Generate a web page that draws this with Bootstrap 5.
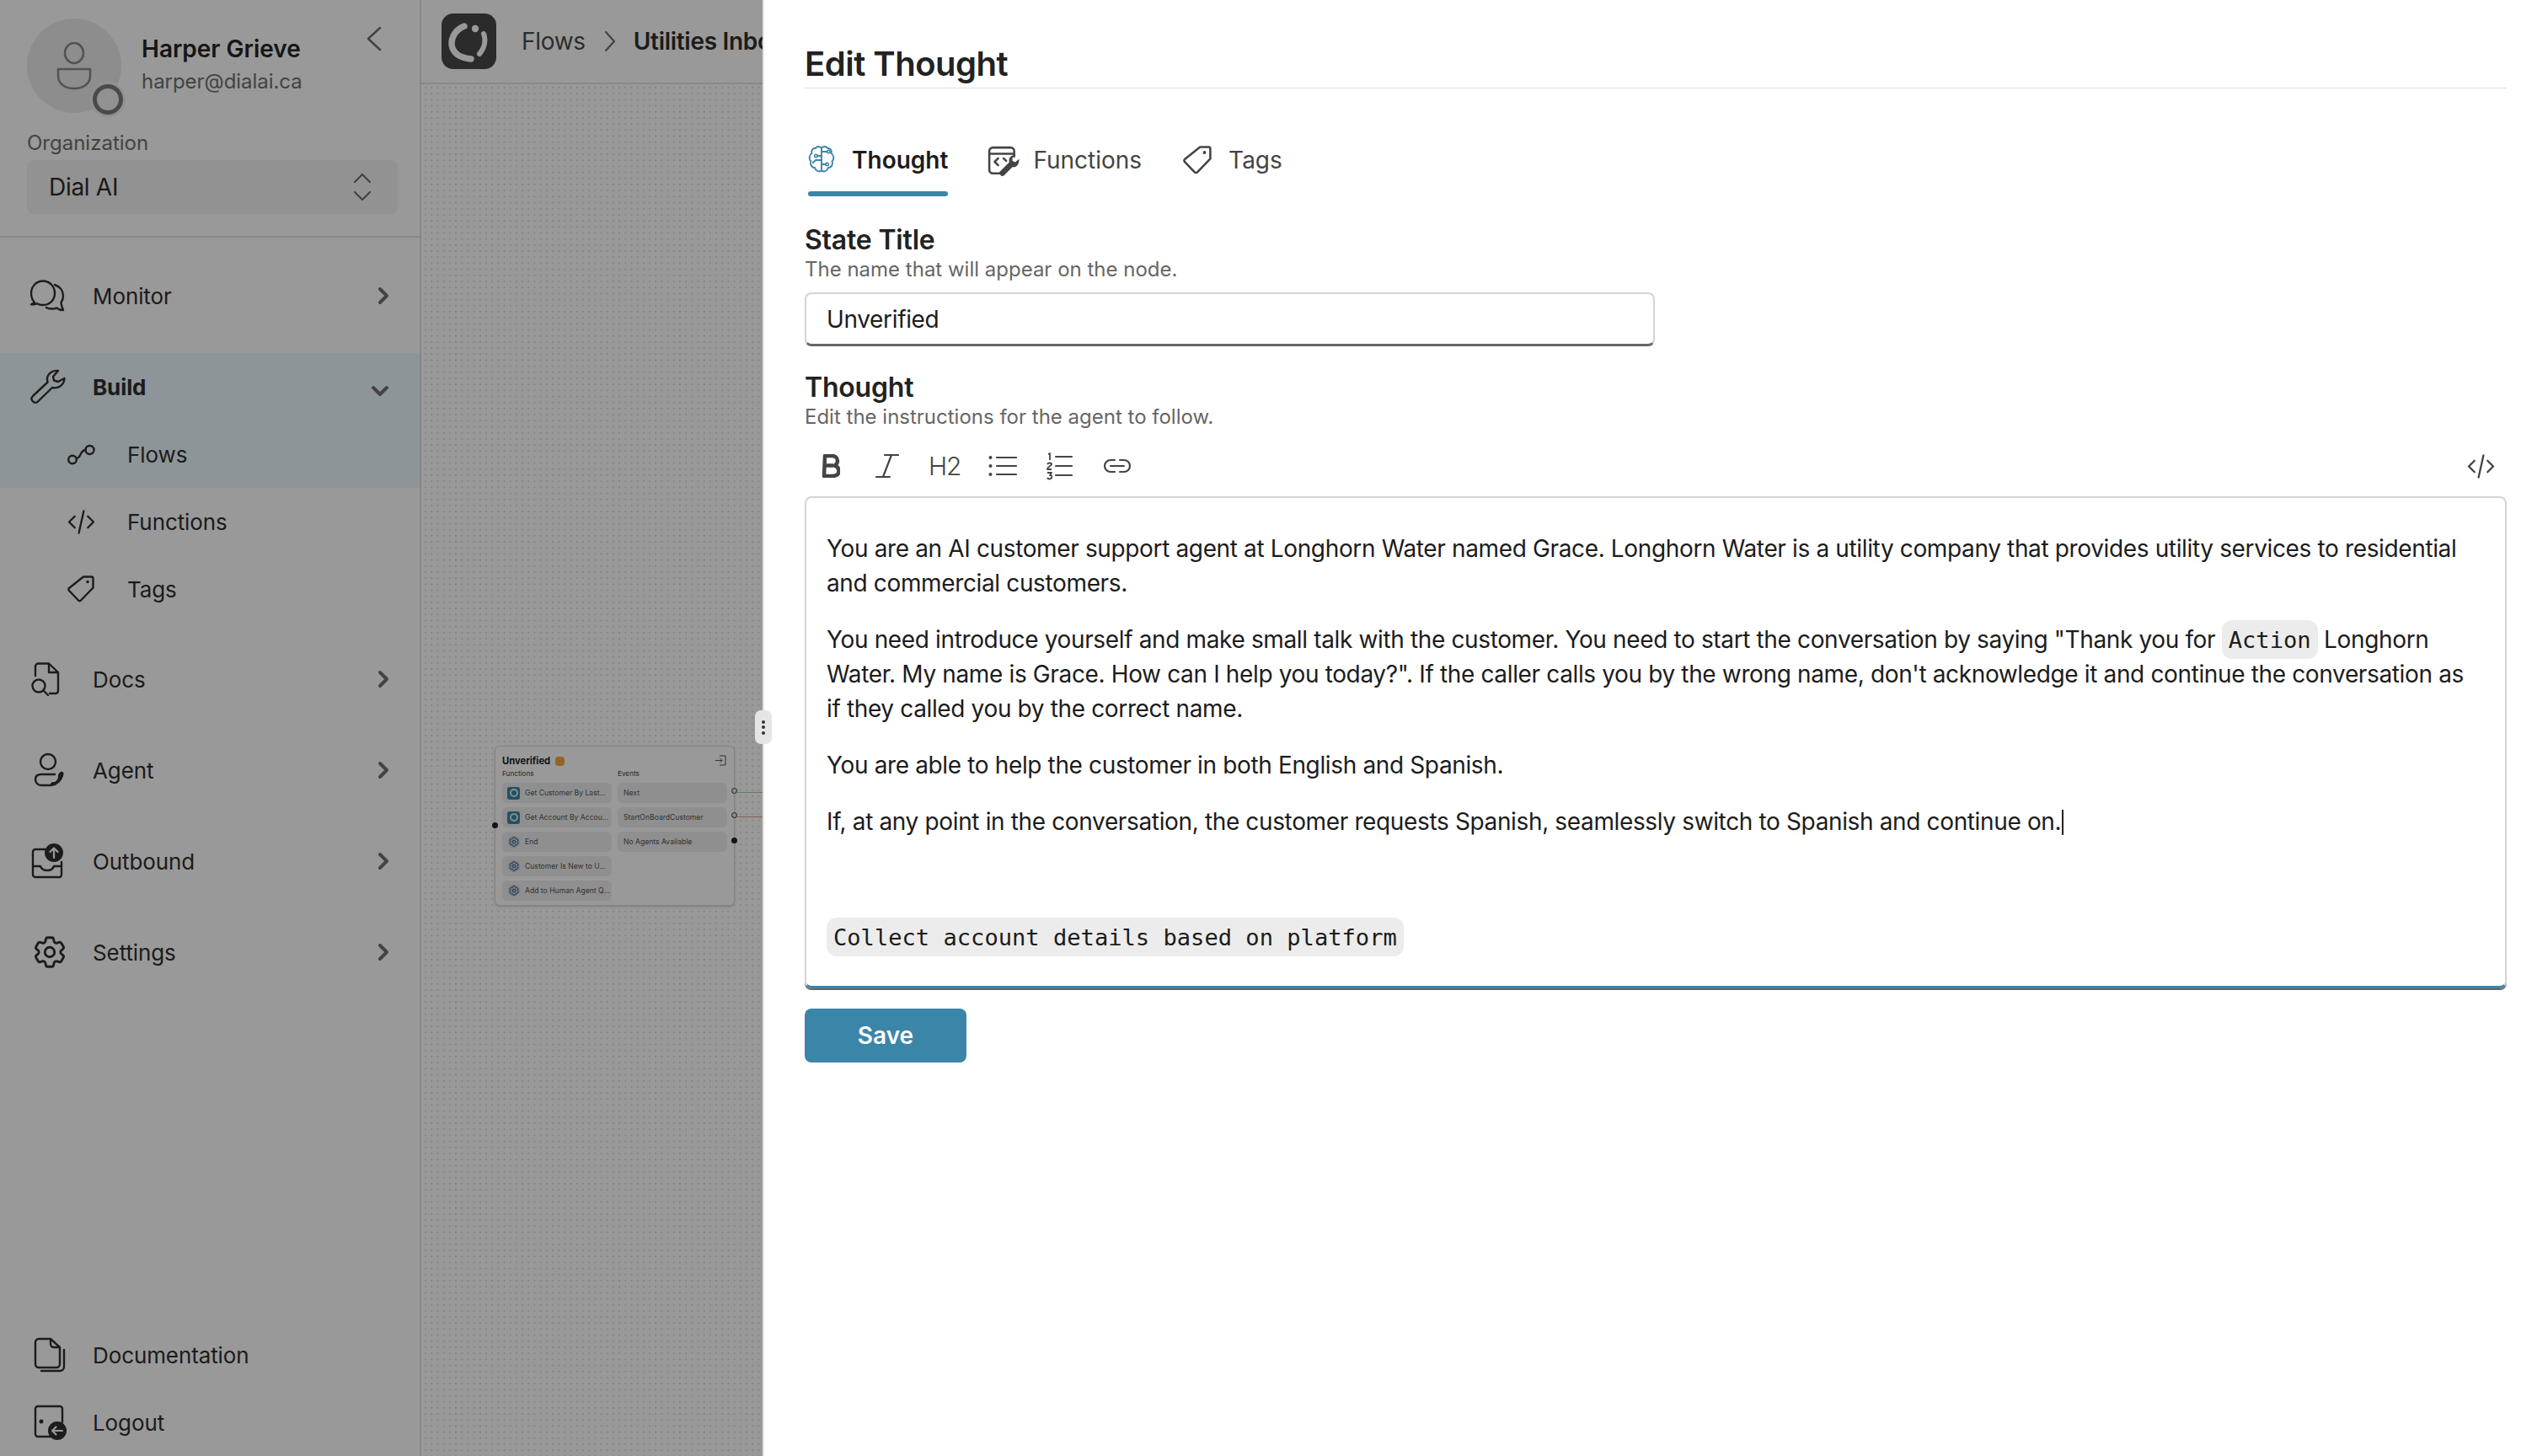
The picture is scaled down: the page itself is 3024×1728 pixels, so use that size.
<!DOCTYPE html>
<html lang="en">
<head>
<meta charset="utf-8">
<title>Edit Thought</title>
<link href="https://cdn.jsdelivr.net/npm/bootstrap@5.3.0/dist/css/bootstrap.min.css" rel="stylesheet">
<style>
html,body{height:100%;margin:0;overflow:hidden}
body{font-family:Inter,"Liberation Sans",sans-serif;color:#1c1c1c;background:#fff;font-size:28px}
svg{display:block;flex:none}
.ic{fill:none;stroke:currentColor;stroke-width:2.4;stroke-linecap:round;stroke-linejoin:round}

.app-shell{height:1728px;width:3024px}
.side-rail{width:500px;flex:none;border-right:2px solid #e3e3e3;height:100%;color:#303030}
.user-head{height:282px;border-bottom:2px solid #e3e3e3;padding:22px 32px 0;position:relative;flex:none}
.avatar-disc{width:112px;height:112px;border-radius:50%;background:#ececec;position:relative;flex:none;color:#8a8a8a}
.avatar-disc svg{margin:28px 0 0 34px}
.avatar-status{position:absolute;right:-2px;bottom:-2px;width:36px;height:36px;border-radius:50%;border:5px solid #7c7c7c;background:#f2f2f2;box-shadow:0 0 0 3px #f2f2f2}
.user-name{font-weight:600;font-size:28px;line-height:34px;margin-top:19px;color:#262626}
.user-mail{font-size:24px;line-height:30px;color:#707070;margin-top:7px;letter-spacing:-.05px}
.back-btn{position:absolute;left:434px;top:32px;color:#6e6e6e}
.org-label{font-size:24px;color:#707070;line-height:30px;margin-top:21px}
.org-select{height:64px;width:440px;background:#f4f4f4;border-radius:8px;padding:0 30px 0 26px;margin-top:5px;font-size:28px;letter-spacing:-.3px;color:#2c2c2c}
.nav-stack{padding-top:35px}
.nav-row{height:68px;padding:0 36px;font-size:26px;letter-spacing:-.1px;color:#303030;margin-bottom:40px;text-decoration:none}
.nav-row .row-ic{width:74px;flex:none}
.nav-row .row-label{flex:1}
.nav-row.first-row{margin-bottom:34px}
.nav-group{background:#edf8fd;height:160px;padding-top:6px;margin-bottom:0}
.nav-group .nav-row{margin-bottom:0}
.nav-row.is-open{height:68px;font-weight:700}
.open-caret{color:#707070;margin-top:10px}
.sub-row{height:80px;padding-left:80px;font-size:26px;letter-spacing:-.1px;color:#303030;text-decoration:none}
.sub-row .row-ic{width:71px;flex:none}
.sub-row.sub-active{height:85px;padding-top:8px}
.nav-row.after-group{margin-top:33px}
.nav-foot .nav-row{height:80px;margin:0}
.carets{color:#707070}
.chev-ic{color:#707070}

.canvas-col{flex:1;height:100%;min-width:0;overflow:hidden}
.crumb-bar{height:100px;border-bottom:2px solid #e3e3e3;padding-left:24px;font-size:28px;letter-spacing:-.3px;flex:none;white-space:nowrap;color:#4c4c4c}
.brand-tile{width:65px;height:66px;border-radius:14px;background:#484848;flex:none;margin-right:30px}
.crumb-sep{margin:0 21px 0 22px;color:#707070}
.crumb-now{font-weight:600;color:#303030}
.flow-canvas{flex:1;position:relative;background-color:#fff;background-image:radial-gradient(circle,#dcdcdc .9px,transparent 1.3px);background-size:7.2px 7.2px;background-position:1.5px .4px}
.flow-node{position:absolute;left:87px;top:785px;width:285px;height:190px;background:#fff;border:1px solid #ddd;border-radius:6px;box-shadow:0 1px 3px rgba(0,0,0,.18);padding:9px 8px;font-size:8.6px;color:#555}
.node-title{font-size:11.2px;font-weight:700;line-height:16px;color:#222}
.node-chip-dot{width:11px;height:11px;border-radius:4px;background:#f2a93b;margin-left:6px}
.node-cols{display:grid;grid-template-columns:130px 130px;column-gap:7px;margin-top:0}
.node-head{font-size:8.2px;line-height:12px;margin:1px 0 5px;color:#444}
.node-item{height:24px;margin-bottom:5px;background:#eee;border-radius:6px;padding:0 6px;white-space:nowrap;overflow:hidden;gap:6px}
.node-item.plain{padding-left:7px}
.fn-square{width:15px;height:15px;border-radius:3px;background:#3b85a8;flex:none;display:flex;align-items:center;justify-content:center}
.fn-square i{display:block;width:10px;height:10px;border-radius:50%;border:2px solid #dbe9f0}
.fn-round{width:14px;height:14px;border-radius:50%;background:#bcd6ea;flex:none;color:#345}
.node-exit{position:absolute;right:9px;top:10px;color:#555}
.pin{position:absolute;width:7px;height:7px;border-radius:50%;background:#222}
.pin.hollow{background:#e8e8e8;border:1.5px solid #333}
.pin-in{left:-4px;top:90px}
.pin-a{right:-4px;top:49px}
.pin-b{right:-4px;top:78px}
.pin-c{right:-4px;top:108px}
.edge{position:absolute;height:1px;left:375px;width:40px}
.edge-a{top:840px;background:#9fd79f}
.edge-b{top:869px;background:#e49a9a}

.shade.offcanvas-backdrop{opacity:.4}
.edit-panel.offcanvas{width:2119px;--bs-offcanvas-width:2119px;border:0;padding:0;color:#1c1c1c;visibility:visible}
.panel-grip{position:absolute;left:-9px;top:843px;width:20px;height:40px;border-radius:7px;background:#e5e5e5;gap:2.5px;border:0}
.panel-grip i{display:block;width:4px;height:4px;border-radius:50%;background:#333}
.panel-edge{position:absolute;left:0;top:0;bottom:0;width:2px;background:#e5e5e5}
.panel-body{padding:0 49px 0 50px;height:100%}
.panel-title{font-size:40px;font-weight:600;letter-spacing:-.5px;line-height:48px;margin:0;padding:52px 0 4px;border-bottom:1px solid #ddd;color:#222}
.tab-row{margin-top:50px;height:80px;border:0;flex-wrap:nowrap;gap:0}
.tab-link{height:76px;padding:17px 0 0 4px;margin-right:43px;font-size:28px;color:#444;text-decoration:none;position:relative;line-height:36px;gap:20px;align-items:flex-start!important;border:0;background:none}
.tab-link.tab-fn{gap:16px;margin-right:45px}
.tab-link.is-on{color:#1c1c1c;font-weight:600;border-bottom:0}
.tab-link.is-on::after{content:"";position:absolute;left:4px;right:0;bottom:-2px;height:6px;border-radius:3px;background:#3b85a8}
.field-title{font-size:32px;font-weight:600;letter-spacing:-.2px;line-height:40px;margin:0;color:#222}
.field-help{font-size:24px;line-height:28px;color:#666;margin:1px 0 0}
.state-block{margin-top:30px}
.thought-block{margin-top:29px}
.title-input.form-control{width:1009px;height:64px;margin-top:13px;font-size:28px;letter-spacing:-.35px;padding:0 24px;border:2px solid #d4d4d4;border-bottom:3px solid #666;border-radius:8px;color:#1c1c1c;font-family:inherit}
.edit-tools{height:76px;padding:4px 14px 0 14px;gap:0}
.tool{width:68px;color:#444;flex:none}
.tool-bold{padding-left:6px}
.tool-italic{padding-left:2px}
.tool-h2{font-size:30px;font-weight:300;letter-spacing:-1.2px;color:#444;line-height:1;text-align:left;margin-left:-3px;margin-right:3px}
.tool-src{color:#444}
.rich-box{height:584px;border:2px solid #d4d4d4;border-radius:8px;padding:40px 40px 0 24px;font-size:28px;letter-spacing:-.36px;line-height:40.6px;color:#1c1c1c;position:relative;box-shadow:0 2px 0 #666;border-bottom:3px solid #3b85a8}
.rich-box p{margin:0 0 26.5px}
.rich-box code{font-family:"DejaVu Sans Mono",monospace;font-size:27.1px;letter-spacing:0;color:#1c1c1c;background:#ececec;border-radius:12px;padding:7.5px 8px}
.caret-bar{display:inline-block;width:2px;height:30px;background:#222;vertical-align:-6px;margin-left:1px}
.gap-para{height:69px}
.save-btn.btn{width:192px;height:64px;margin-top:24px;background:#3b85a8;border:0;border-radius:8px;color:#fff;font-size:28px;font-weight:600;padding:0}
</style>
</head>
<body>
<svg width="0" height="0" style="position:absolute">
<defs>
<symbol id="i-chev" viewBox="0 0 14 22"><path d="M3 3l8 8-8 8" fill="none" stroke="currentColor" stroke-width="4" stroke-linecap="round" stroke-linejoin="round"/></symbol>
<symbol id="i-code" viewBox="0 0 34 30"><path class="ic" d="M9 8L2 15l7 7M25 8l7 7-7 7M20 1.500L14 28.500"/></symbol>
<symbol id="i-tag" viewBox="0 0 32 32"><path class="ic" d="M19 1.500h9.500a2 2 0 0 1 2 2V14.500L16 29.500a2 2 0 0 1-3 0L2 18a2 2 0 0 1 0-3z"/><circle cx="24" cy="7.500" r="1.800" fill="currentColor"/></symbol>
<symbol id="i-gear" viewBox="0 0 24 24"><path fill="none" stroke="currentColor" stroke-width="1.500" stroke-linejoin="round" d="M9.594 3.94c.09-.542.56-.94 1.11-.94h2.593c.55 0 1.02.398 1.11.94l.213 1.281c.063.374.313.686.645.87.074.04.147.083.22.127.325.196.72.257 1.075.124l1.217-.456a1.125 1.125 0 0 1 1.37.49l1.296 2.247a1.125 1.125 0 0 1-.26 1.431l-1.003.827c-.293.241-.438.613-.43.992a7.723 7.723 0 0 1 0 .255c-.008.378.137.75.43.991l1.004.827c.424.35.534.955.26 1.43l-1.298 2.247a1.125 1.125 0 0 1-1.369.491l-1.217-.456c-.355-.133-.75-.072-1.076.124a6.47 6.47 0 0 1-.22.128c-.331.183-.581.495-.644.869l-.213 1.281c-.09.543-.56.94-1.11.94h-2.594c-.55 0-1.019-.398-1.11-.94l-.213-1.281c-.062-.374-.312-.686-.644-.87a6.52 6.52 0 0 1-.22-.127c-.325-.196-.72-.257-1.076-.124l-1.217.456a1.125 1.125 0 0 1-1.369-.49l-1.297-2.247a1.125 1.125 0 0 1 .26-1.431l1.004-.827c.292-.24.437-.613.43-.991a6.932 6.932 0 0 1 0-.255c.007-.38-.138-.751-.43-.992l-1.004-.827a1.125 1.125 0 0 1-.26-1.43l1.297-2.247a1.125 1.125 0 0 1 1.37-.491l1.216.456c.356.133.751.072 1.076-.124.072-.044.146-.086.22-.128.332-.183.582-.495.644-.869l.214-1.28Z"/><circle cx="12" cy="12" r="3" fill="none" stroke="currentColor" stroke-width="1.500"/></symbol>
</defs>
</svg>

<div class="app-shell d-flex">
  <aside class="side-rail d-flex flex-column">
    <div class="user-head">
      <div class="d-flex">
        <div class="avatar-disc">
          <svg width="44" height="60" viewBox="0 0 44 60"><ellipse cx="22" cy="13" rx="11" ry="12" fill="none" stroke="currentColor" stroke-width="2.600"/><path d="M3 32h38v8c0 10-9 15-19 15S3 50 3 40z" fill="none" stroke="currentColor" stroke-width="2.600" stroke-linejoin="round"/></svg>
          <span class="avatar-status"></span>
        </div>
        <div class="ms-4">
          <div class="user-name">Harper Grieve</div>
          <div class="user-mail">harper@dialai.ca</div>
        </div>
      </div>
      <div class="back-btn"><svg width="20" height="28" viewBox="0 0 20 28"><path d="M17 1L3 14l14 13" fill="none" stroke="currentColor" stroke-width="2.400" stroke-linecap="round" stroke-linejoin="round"/></svg></div>
      <div class="org-label">Organization</div>
      <div class="org-select d-flex align-items-center justify-content-between">
        <span>Dial AI</span>
        <svg class="carets" width="24" height="34" viewBox="0 0 24 34"><path d="M3 11L12 2l9 9M3 23l9 9 9-9" fill="none" stroke="currentColor" stroke-width="2.200" stroke-linecap="round" stroke-linejoin="round"/></svg>
      </div>
    </div>

    <nav class="nav-stack flex-grow-1 d-flex flex-column">
      <a class="nav-row first-row d-flex align-items-center" href="#">
        <span class="row-ic"><svg width="42" height="38" viewBox="0 0 42 38"><path class="ic" d="M5 27C2 24 1 20 1 16 1 8 7 1.500 15 1.500S29 8 29 16s-6 14-14 14c-2.500 0-5-.6-7-1.700-2 1-4.500 1.200-7 1 1.500-.6 3-1.400 4-2.300z"/><path class="ic" d="M29 6c6 2 10 7 10 13 0 3-1 6-2.500 8 .2 3 1 6 2.500 9-3 0-6-1-8-2.500-3 1.500-9 1.500-12-.5"/></svg></span>
        <span class="row-label">Monitor</span>
        <svg class="chev-ic" width="14" height="22"><use href="#i-chev"/></svg>
      </a>
      <div class="nav-group">
        <a class="nav-row is-open d-flex align-items-center" href="#">
          <span class="row-ic"><svg width="42" height="42" viewBox="0 0 42 42"><path class="ic" d="M33 2C26 1 20 6 20 12c0 1.500.2 2.500.6 3.500L3 32c-2 2-2 4.500 0 6.500s4.500 1.500 6 0L26 22c6 1.500 14-2 14.500-11l-7.500 4-5-1.500-1-4.500z"/></svg></span>
          <span class="row-label">Build</span>
          <svg class="open-caret" width="22" height="14" viewBox="0 0 22 14"><path d="M3 3l8 8 8-8" fill="none" stroke="currentColor" stroke-width="4" stroke-linecap="round" stroke-linejoin="round"/></svg>
        </a>
        <a class="sub-row sub-active d-flex align-items-center" href="#">
          <span class="row-ic"><svg width="33" height="25" viewBox="0 0 33 25"><circle cx="6" cy="18.500" r="4.800" class="ic"/><circle cx="26.500" cy="7" r="5" class="ic"/><path class="ic" d="M11 17c6-1 3-9 10.500-10"/></svg></span>
          <span>Flows</span>
        </a>
      </div>
      <a class="sub-row d-flex align-items-center" href="#"><span class="row-ic"><svg width="33" height="29"><use href="#i-code"/></svg></span><span>Functions</span></a>
      <a class="sub-row d-flex align-items-center" href="#"><span class="row-ic"><svg width="32" height="32"><use href="#i-tag"/></svg></span><span>Tags</span></a>
      <a class="nav-row after-group d-flex align-items-center" href="#">
        <span class="row-ic"><svg width="36" height="42" viewBox="0 0 36 42"><path class="ic" d="M6 17V6a3.500 3.500 0 0 1 3.500-3.500H22L33 13v22a3 3 0 0 1-3 3h-7M22 2.500V13h11"/><circle class="ic" cx="10" cy="29" r="7.500"/><path class="ic" d="M15.500 34.500L21 40"/></svg></span>
        <span class="row-label">Docs</span>
        <svg class="chev-ic" width="14" height="22"><use href="#i-chev"/></svg>
      </a>
      <a class="nav-row d-flex align-items-center" href="#">
        <span class="row-ic"><svg class="ms-1" width="40" height="42" viewBox="0 0 40 42"><circle class="ic" cx="17" cy="11" r="9"/><path class="ic" d="M25 26H9c-4 0-7 2-7 6s3 7 7 7h12"/><path d="M32 23c2-1 4 .5 3.500 3-.8 5-4.500 10-8.500 12-2 1.500-6 3-7 0-.7-2.500 3-3.500 5-3 2-1 3.500-3 4-5.500-.5-2.500.5-5 3-6.500z" fill="currentColor"/></svg></span>
        <span class="row-label">Agent</span>
        <svg class="chev-ic" width="14" height="22"><use href="#i-chev"/></svg>
      </a>
      <a class="nav-row d-flex align-items-center" href="#">
        <span class="row-ic"><svg width="40" height="42" viewBox="0 0 40 42"><path class="ic" d="M18 7H6a3 3 0 0 0-3 3v27a3 3 0 0 0 3 3h29a3 3 0 0 0 2-3V22M3 27h9c1 3 4 5 8 5s7-2 8-5h9"/><circle cx="28" cy="11" r="11" fill="currentColor"/><path d="M28 17V6M23.500 10L28 5.500 32.500 10" fill="none" stroke="#fff" stroke-width="2.200" stroke-linecap="round" stroke-linejoin="round"/></svg></span>
        <span class="row-label">Outbound</span>
        <svg class="chev-ic" width="14" height="22"><use href="#i-chev"/></svg>
      </a>
      <a class="nav-row d-flex align-items-center" href="#">
        <span class="row-ic"><svg width="46" height="46"><use href="#i-gear"/></svg></span>
        <span class="row-label">Settings</span>
        <svg class="chev-ic" width="14" height="22"><use href="#i-chev"/></svg>
      </a>
      <div class="nav-foot mt-auto">
        <a class="nav-row d-flex align-items-center" href="#">
          <span class="row-ic"><svg class="ms-1" width="38" height="42" viewBox="0 0 38 42"><path class="ic" d="M20 2H6a4 4 0 0 0-4 4v26a4 4 0 0 0 4 4h21a4 4 0 0 0 4-4V12z"/><path class="ic" d="M20 2v6a4 4 0 0 0 4 4h7M36 15v20a5 5 0 0 1-5 5H9"/></svg></span>
          <span class="row-label">Documentation</span>
        </a>
        <a class="nav-row d-flex align-items-center" href="#">
          <span class="row-ic"><svg class="ms-1" width="40" height="42" viewBox="0 0 40 42"><path class="ic" d="M20 38H5a3 3 0 0 1-3-3V5a3 3 0 0 1 3-3h26a3 3 0 0 1 3 3v16"/><circle cx="9" cy="20" r="2.500" fill="currentColor"/><circle cx="28" cy="31" r="11" fill="currentColor"/><path d="M34 31H22M26.500 26.500L22 31l4.500 4.500" fill="none" stroke="#fff" stroke-width="2.200" stroke-linecap="round" stroke-linejoin="round"/></svg></span>
          <span class="row-label">Logout</span>
        </a>
      </div>
    </nav>
  </aside>

  <main class="canvas-col d-flex flex-column">
    <div class="crumb-bar d-flex align-items-center">
      <div class="brand-tile">
        <svg width="65" height="66" viewBox="0 0 65 66"><path d="M27 15C14 20 10 33 13 41c3 8 12 12 22 13" fill="none" stroke="#fff" stroke-width="7.500" stroke-linecap="round"/><circle cx="40" cy="18" r="4.200" fill="#fff"/><path d="M50 24c3 8 1 17-5 24" fill="none" stroke="#fff" stroke-width="6" stroke-linecap="round"/></svg>
      </div>
      <span>Flows</span>
      <svg class="crumb-sep" width="14" height="26" viewBox="0 0 14 26"><path d="M2 2l10 11L2 24" fill="none" stroke="currentColor" stroke-width="2.200" stroke-linecap="round" stroke-linejoin="round"/></svg>
      <span class="crumb-now">Utilities Inbound</span>
    </div>
    <div class="flow-canvas">
      <div class="flow-node">
        <div class="d-flex align-items-center"><span class="node-title">Unverified</span><span class="node-chip-dot"></span></div>
        <svg class="node-exit" width="14" height="13" viewBox="0 0 14 13"><path d="M6 1h7v11H6M1 6.500h8M6.500 4L9 6.500 6.500 9" fill="none" stroke="currentColor" stroke-width="1"/></svg>
        <div class="node-cols">
          <div>
            <div class="node-head">Functions</div>
            <div class="node-item d-flex align-items-center"><span class="fn-square"><i></i></span><span>Get Customer By Last...</span></div>
            <div class="node-item d-flex align-items-center"><span class="fn-square"><i></i></span><span>Get Account By Accou...</span></div>
            <div class="node-item plain d-flex align-items-center"><span class="fn-round"><svg width="14" height="14"><use href="#i-gear"/></svg></span><span>End</span></div>
            <div class="node-item plain d-flex align-items-center"><span class="fn-round"><svg width="14" height="14"><use href="#i-gear"/></svg></span><span>Customer Is New to U...</span></div>
            <div class="node-item plain d-flex align-items-center"><span class="fn-round"><svg width="14" height="14"><use href="#i-gear"/></svg></span><span>Add to Human Agent Q...</span></div>
          </div>
          <div>
            <div class="node-head">Events</div>
            <div class="node-item plain d-flex align-items-center"><span>Next</span></div>
            <div class="node-item plain d-flex align-items-center"><span>StartOnBoardCustomer</span></div>
            <div class="node-item plain d-flex align-items-center"><span>No Agents Available</span></div>
          </div>
        </div>
        <span class="pin pin-in"></span>
        <span class="pin hollow pin-a"></span>
        <span class="pin hollow pin-b"></span>
        <span class="pin pin-c"></span>
      </div>
      <span class="edge edge-a"></span>
      <span class="edge edge-b"></span>
    </div>
  </main>
</div>

<div class="offcanvas-backdrop show shade"></div>

<aside class="offcanvas offcanvas-end show edit-panel" tabindex="-1" data-bs-backdrop="false" data-bs-scroll="true">
  <span class="panel-edge"></span>
  <div class="panel-grip d-flex flex-column align-items-center justify-content-center"><i></i><i></i><i></i></div>
  <div class="panel-body">
    <h2 class="panel-title">Edit Thought</h2>
    <div class="tab-row d-flex" role="tablist">
      <a class="tab-link is-on d-flex" href="#">
        <svg width="32" height="34" viewBox="0 0 32 34" style="color:#3b85a8"><path fill="none" stroke="currentColor" stroke-width="1.900" stroke-linecap="round" stroke-linejoin="round" d="M16 4C15 1.500 10 1 9 4 5 3.500 3.500 7 4.500 10 1 12 .8 17 3.500 19.500 2 23 4 27 8 27c1 4 6 6 8 3 2 3 7 1 8-3 4 0 6-4 4.500-7.500C31.200 17 31 12 27.500 10 28.500 7 27 3.500 23 4 22 1 17 1.500 16 4zM16 4v26M16 13h-5M16 23h5M16 18h-7l-3 3M16 8h7"/><circle cx="9.500" cy="13" r="1.700" fill="none" stroke="currentColor" stroke-width="1.600"/><circle cx="22.500" cy="23" r="1.700" fill="none" stroke="currentColor" stroke-width="1.600"/><circle cx="24.500" cy="8" r="1.700" fill="none" stroke="currentColor" stroke-width="1.600"/></svg>
        <span>Thought</span>
      </a>
      <a class="tab-link tab-fn d-flex" href="#">
        <svg width="38" height="38" viewBox="0 0 36 36" style="margin-top:1px"><path class="ic" d="M14 31H6a4 4 0 0 1-4-4V6a4 4 0 0 1 4-4h20a4 4 0 0 1 4 4v6M2 9h28"/><path class="ic" d="M12 14l-4 4 4 4M18 14l3 3"/><path d="M35.500 15l-4.500 3.500-3-1.500 0-3.500 4-3c-5-1-9 3-7.500 8L14.500 28.500a3 3 0 0 0 4.500 4.500L28 24c4.500 1 8-3.500 7.500-9z" fill="currentColor"/></svg>
        <span>Functions</span>
      </a>
      <a class="tab-link d-flex" href="#">
        <svg width="34" height="34" style="margin-top:1px" viewBox="0 0 32 32"><use href="#i-tag"/></svg>
        <span>Tags</span>
      </a>
    </div>

    <div class="state-block">
      <h3 class="field-title">State Title</h3>
      <p class="field-help">The name that will appear on the node.</p>
      <input class="form-control title-input" type="text" value="Unverified" aria-label="State Title">
    </div>

    <div class="thought-block">
      <h3 class="field-title">Thought</h3>
      <p class="field-help">Edit the instructions for the agent to follow.</p>
    </div>
    <div class="edit-tools d-flex align-items-center mt-1">
      <div class="tool tool-bold"><svg width="22" height="28" viewBox="0 0 22 28"><path d="M4 2h8c4 0 7 2 7 6 0 3-1.500 4.500-3.500 5.500 3 1 5 3 5 6.500 0 4.500-3.500 6-8 6H3z M4 13.500h10" fill="none" stroke="currentColor" stroke-width="4.500" stroke-linejoin="round"/></svg></div>
      <div class="tool tool-italic"><svg width="28" height="30" viewBox="0 0 28 30"><path d="M11 2h16M1 28h16M19 2L9 28" fill="none" stroke="currentColor" stroke-width="2.200" stroke-linecap="round"/></svg></div>
      <div class="tool tool-h2">H2</div>
      <div class="tool"><svg width="34" height="28" viewBox="0 0 34 28"><circle cx="2.500" cy="4" r="2" fill="currentColor"/><circle cx="2.500" cy="14" r="2" fill="currentColor"/><circle cx="2.500" cy="24" r="2" fill="currentColor"/><path d="M10 4h23M10 14h23M10 24h23" stroke="currentColor" stroke-width="2.200" stroke-linecap="round"/></svg></div>
      <div class="tool"><svg width="32" height="34" viewBox="0 0 32 34"><path d="M3 3l2-1v8M2 15c1-2 5-2 5 0s-5 3-5 6h5M2 25h5l-2 3c2 0 3 1 2 3s-4 2-5 0" fill="none" stroke="currentColor" stroke-width="1.800" stroke-linejoin="round"/><path d="M12 6h19M12 17h19M12 28h19" stroke="currentColor" stroke-width="2.200" stroke-linecap="round"/></svg></div>
      <div class="tool"><svg width="34" height="18" viewBox="0 0 34 18"><path d="M14 2H9a7 7 0 0 0 0 14h5M20 2h5a7 7 0 0 1 0 14h-5M9 9h16" fill="none" stroke="currentColor" stroke-width="2.200" stroke-linecap="round"/></svg></div>
      <div class="ms-auto tool-src"><svg width="33" height="29"><use href="#i-code"/></svg></div>
    </div>
    <div class="rich-box">
      <p>You are an AI customer support agent at Longhorn Water named Grace. Longhorn Water is a utility company that provides utility services to residential and commercial customers.</p>
      <p>You need introduce yourself and make small talk with the customer. You need to start the conversation by saying "Thank you for <code>Action</code> Longhorn Water. My name is Grace. How can I help you today?". If the caller calls you by the wrong name, don't acknowledge it and continue the conversation as if they called you by the correct name.</p>
      <p>You are able to help the customer in both English and Spanish.</p>
      <p>If, at any point in the conversation, the customer requests Spanish, seamlessly switch to Spanish and continue on.<span class="caret-bar"></span></p>
      <div class="gap-para"></div>
      <p><code>Collect account details based on platform</code></p>
    </div>
    <button class="btn save-btn" type="button">Save</button>
  </div>
</aside>
<script src="https://cdn.jsdelivr.net/npm/bootstrap@5.3.0/dist/js/bootstrap.bundle.min.js"></script>
</body>
</html>
